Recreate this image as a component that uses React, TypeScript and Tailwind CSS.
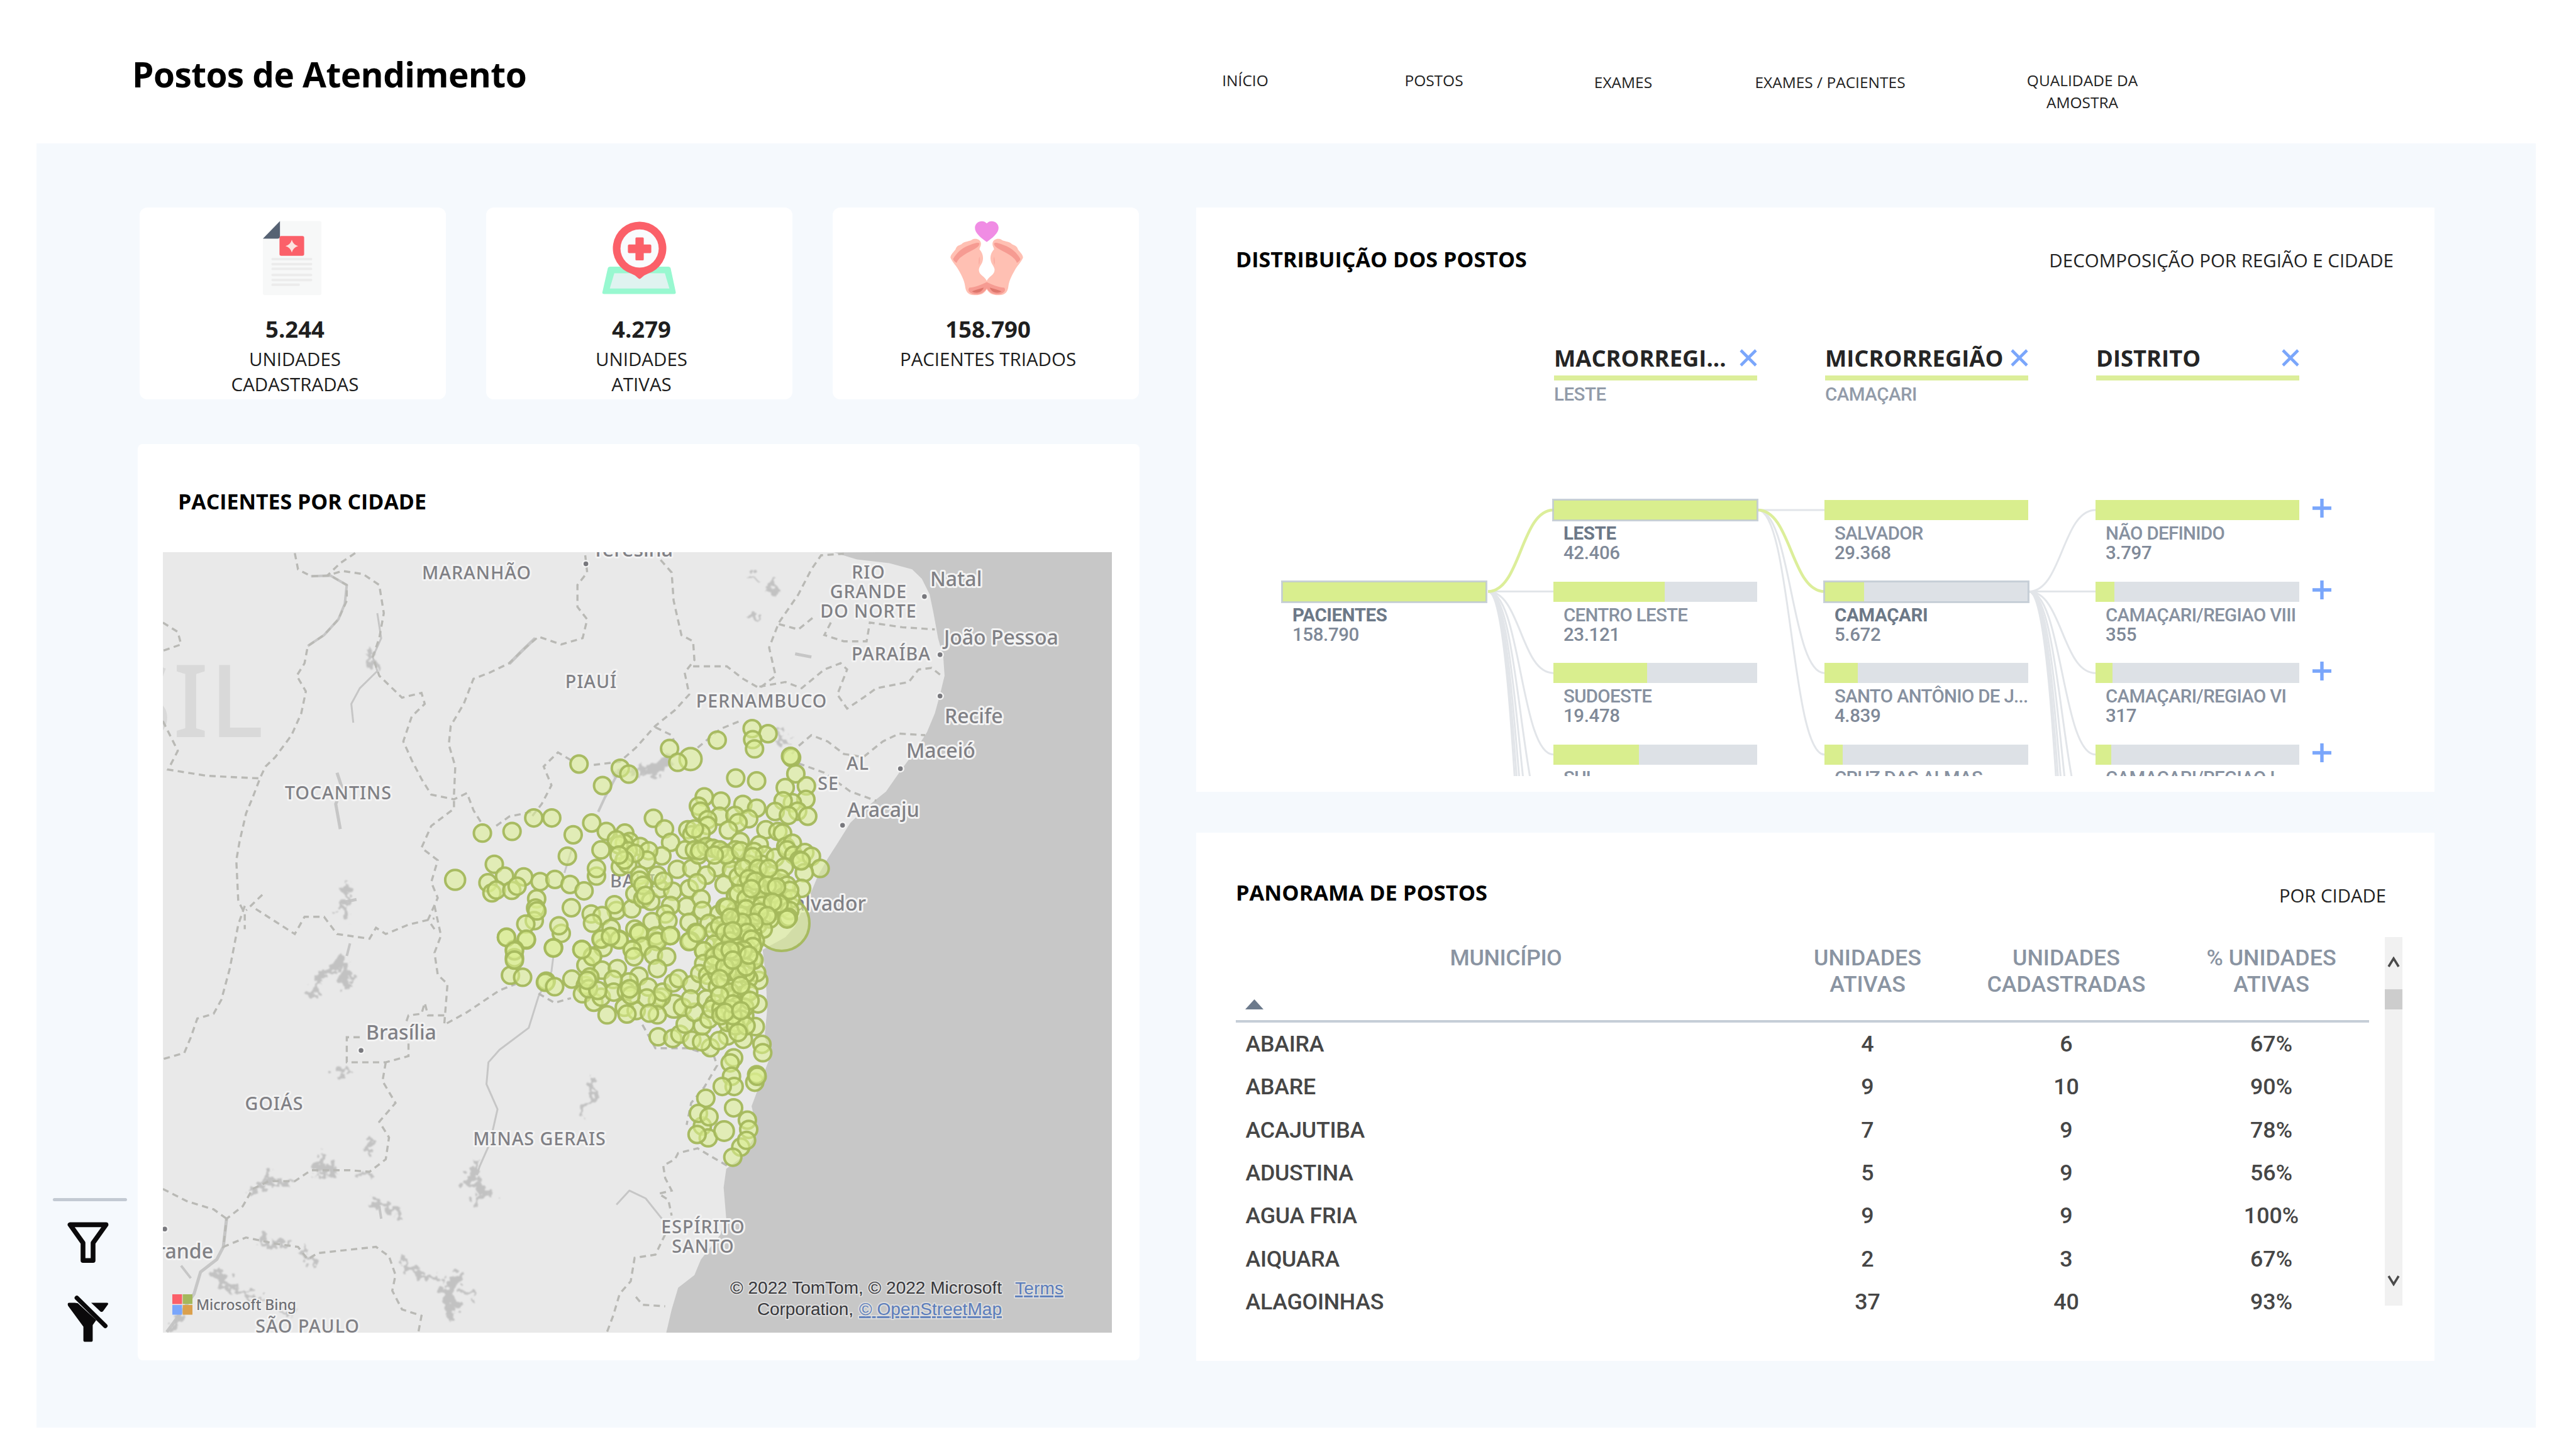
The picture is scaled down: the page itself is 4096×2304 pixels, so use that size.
import React from "react";

const SANS = "font-['Open_Sans','Noto_Sans',sans-serif]";
const DIN = "font-[Roboto,'Noto_Sans',sans-serif]";

/* ---------- header ---------- */

const NAV = [
  { label: "INÍCIO", cls: "w-[300px] pt-[111px]" },
  { label: "POSTOS", cls: "w-[300px] pt-[111px]" },
  { label: "EXAMES", cls: "w-[302px] pt-[114px]" },
  { label: "EXAMES / PACIENTES", cls: "w-[356px] pt-[114px]" },
  { label: "QUALIDADE DA AMOSTRA", cls: "w-[446px] px-[120px] pt-[111px]" },
];

function Header() {
  return (
    <header className="flex h-[228px] w-full bg-white text-black">
      <h1 className="w-[1830px] pl-[210px] pt-[78px] text-[55px] leading-[80px] font-bold tracking-[-0.6px]">
        Postos de Atendimento
      </h1>
      <nav className="flex text-[24.5px] leading-[34.5px] text-[#222]">
        {NAV.map((n) => (
          <a key={n.label} className={`block text-center ${n.cls}`}>
            {n.label}
          </a>
        ))}
      </nav>
    </header>
  );
}

/* ---------- icons ---------- */

function DocumentIcon() {
  return (
    <svg className="h-[144px] w-[144px] -translate-x-[3px]" viewBox="0 0 720 720">
      <path d="M278 48H590Q606 48 606 64V620Q606 636 590 636H156Q140 636 140 620V190H278Z" fill="#f7f8f8" />
      <path d="M276 48V168Q276 188 256 188H140Z" fill="#566273" />
      <rect x="272" y="166" width="196" height="158" rx="14" fill="#fb6069" />
      <path d="M370 196Q380 234 420 246Q380 258 370 298Q360 258 320 246Q360 234 370 196Z" fill="#fbe4e0" />
      <g fill="#ececec">
        <rect x="208" y="340" width="324" height="20" rx="8" />
        <rect x="208" y="380" width="324" height="20" rx="8" />
        <rect x="208" y="418" width="324" height="20" rx="8" />
        <rect x="208" y="466" width="324" height="20" rx="8" />
        <rect x="208" y="506" width="324" height="20" rx="8" />
        <rect x="208" y="544" width="226" height="20" rx="8" />
      </g>
    </svg>
  );
}

function PinIcon() {
  return (
    <svg className="h-[144px] w-[156px] -translate-x-[2px]" viewBox="0 0 780 720">
      <path d="M172 410H632Q648 410 652 424L692 610Q696 628 680 628H122Q104 628 110 610L152 424Q156 410 172 410Z" fill="#98f8d0" />
      <path d="M204 462H606L642 584H168Z" fill="#dff3f0" />
      <path d="M405 52A212 212 0 0 1 470 466Q440 476 418 500Q405 514 392 500Q370 476 340 466A212 212 0 0 1 405 52Z" fill="#fb6069" />
      <circle cx="405" cy="266" r="152" fill="#f9fbfd" />
      <path d="M380 178H430Q438 178 438 186V234H488Q498 234 498 244V292Q498 302 488 302H438V352Q438 360 430 360H380Q372 360 372 352V302H322Q312 302 312 292V244Q312 234 322 234H372V186Q372 178 380 178Z" fill="#fb6069" />
    </svg>
  );
}

function Foot() {
  return (
    <>
      <path
        d="M92 340C88 318 120 290 132 272C140 244 160 240 178 232C192 216 210 214 224 210C242 202 252 204 262 196C290 180 330 192 334 224C336 246 324 256 322 272C344 296 352 322 350 350C346 390 322 404 318 430C316 456 330 470 346 484C360 496 374 508 380 524V590C356 632 320 638 280 636C232 634 214 612 208 566C202 520 180 480 160 444C140 404 110 380 92 340Z"
        fill="#ffc0b3"
      />
      <path d="M112 350C140 300 180 262 240 240C280 226 322 210 322 230C316 262 262 278 220 304C180 328 150 350 140 380C128 372 116 362 112 350Z" fill="#f69b92" />
      <path d="M322 330Q334 360 318 396Q310 360 322 330Z" fill="#fbaea3" />
      <path d="M380 532C330 556 300 570 240 578C226 600 240 622 284 630C330 632 360 616 380 582Z" fill="#f69b92" />
      <path d="M262 606C300 590 330 584 356 576C344 612 300 630 262 606Z" fill="#dd766c" />
    </>
  );
}

function FeetIcon() {
  return (
    <svg className="h-[144px] w-[156px] translate-x-[4px]" viewBox="0 0 780 720">
      <Foot />
      <g transform="translate(760 0) scale(-1 1)">
        <Foot />
      </g>
      <path d="M380 214C340 186 284 144 286 100C288 52 348 32 380 66C412 32 472 52 474 100C476 144 420 186 380 214Z" fill="#f08ce4" />
    </svg>
  );
}

function FunnelIcon() {
  return (
    <svg className="h-[66px] w-[66px]" viewBox="0 0 330 330">
      <path
        d="M22 22H308L205 166V306H125V166Z"
        fill="none"
        stroke="#0b0a0b"
        strokeWidth="38"
        strokeLinejoin="round"
      />
    </svg>
  );
}

function FunnelOffIcon() {
  return (
    <svg className="h-[76px] w-[66px]" viewBox="0 0 330 380">
      <path d="M14 62H60L84 66L230 200L202 240V362Q202 372 192 372H138Q128 372 128 362V252L6 86Q-2 62 14 62Z" fill="#0b0a0b" />
      <path d="M76 24L302 246" stroke="#0b0a0b" strokeWidth="36" strokeLinecap="round" />
      <path d="M190 62H316Q330 64 322 78L284 130Q274 140 264 132Z" fill="#0b0a0b" />
    </svg>
  );
}

function CrossIcon() {
  return (
    <svg className="h-[28px] w-[28px]" viewBox="0 0 28 28">
      <path d="M2 2L26 26M26 2L2 26" stroke="#7aa6fb" strokeWidth="4.6" />
    </svg>
  );
}

function PlusIcon() {
  return (
    <svg className="h-[30px] w-[30px]" viewBox="0 0 30 30">
      <path d="M15 0V30M0 15H30" stroke="#7aa6fb" strokeWidth="5.4" />
    </svg>
  );
}

/* ---------- KPI cards ---------- */

function Kpi({ icon, value, label, labelCls }: { icon: React.ReactNode; value: string; label: string; labelCls: string }) {
  return (
    <div className="flex h-[305px] w-[487px] flex-col items-center rounded-[12px] bg-white pt-[12px]">
      {icon}
      <div className="mt-[17px] pl-[7px] text-[36.5px] leading-[40px] font-bold text-[#1f1f1f]">{value}</div>
      <div className={`mt-[8px] pl-[7px] text-center text-[29.5px] leading-[39.5px] text-[#1c1c1c] ${labelCls}`}>{label}</div>
    </div>
  );
}

/* ---------- map ---------- */

const MAP_W = 1508.6;
const MAP_H = 1241.4;
const GEO = "matrix(1.0332 0 0 .49745 -43.4 -181.6)";
const GEO_S = "matrix(1.0332 0 0 .49745 -43.4 562.4)";

const SEA =
  "M1075 366L1110 388L1160 400L1195 420L1210 450L1222 500L1228 560L1235 640L1243 700L1245 760L1238 820L1230 880L1218 940L1200 1000L1175 1070L1155 1130L1125 1180L1100 1230L1082 1290L1065 1345L1050 1400L1040 1450L1030 1490L1015 1560L1000 1596L965 1636L970 1726L972 1826L968 1916L978 1970L957 2086L948 2136L957 2216L935 2296L909 2336L905 2396L909 2496L900 2546L870 2626L860 2676L835 2716L825 2786L816 2866H1510V360Z";

const BORDERS_N = [
  "245 368 250 420 270 442 300 440 325 470 325 520 312 580 290 630 265 665 260 720 248 760 262 810 255 880 240 950 215 1020 200 1050 192 1085 180 1150 170 1200 160 1290 155 1350 158 1480 168 1520 168 1570",
  "338 368 315 400 295 440 318 425 350 435 375 470 382 560 375 640 365 700 375 760 395 800 410 830 440 815 445 850 425 890 412 970 425 1030 440 1090 455 1140 490 1155 510 1135 520 1190 535 1240",
  "692 375 695 430 680 470 680 540 695 580 688 640 655 660 620 635 600 670 575 720 545 750 520 770 505 850 485 920 482 980 492 1050 490 1140",
  "808 390 825 430 828 520 840 630 858 650 860 710 845 750 852 820 830 870 800 920 770 990 745 1035 705 1045",
  "670 1030 650 1005 628 1050 640 1110 625 1170 610 1210",
  "800 925 825 950 830 975",
  "858 730 910 730 935 770 960 800 985 760 975 670 990 590 1020 500 1040 420 1055 375 1090 370",
  "990 595 1020 612 1045 570",
  "960 795 1000 780 1025 800 1060 740 1085 720 1095 740 1080 820 1095 865 1120 830 1140 800 1190 780 1205 740 1225 735 1240 760",
  "1070 590 1060 630 1090 650 1125 650 1130 590 1180 605 1230 612",
  "865 990 900 930 930 905",
  "1010 1010 1020 985 1040 950 1065 970 1090 1010 1120 1020 1150 970 1175 945 1215 950",
  "1020 1040 1060 1070 1100 1130 1140 1160",
  "42 590 65 620 70 660 42 680",
  "42 905 65 1000 50 1060 110 1080 190 1088",
  "490 1160 490 1185 455 1240 440 1310 465 1350 455 1420 465 1470 450 1540 460 1570",
  "195 1460 170 1510",
  "555 1240 575 1210 610 1195",
];

const BORDERS_S = [
  "168 0 158 60 145 200 132 300 120 345 95 360 85 420 75 470 42 490",
  "460 0 470 95 460 150 465 220 480 250 475 380 510 340 560 270 585 250",
  "185 10 215 50 245 90 260 35 290 35 310 90 360 105 370 70 385 90 420 60 460 40",
  "620 280 645 310 670 295",
  "780 380 800 455 850 455 890 480 895 510 875 580 855 630 848 700",
  "910 830 885 800 865 775 835 790 830 810 812 830 815 870 825 910 805 920 820 940 825 990",
  "815 1050 800 1115 768 1125 762 1200 745 1240 735 1310 725 1365",
  "770 1250 780 1275 815 1280",
  "475 350 450 350 445 310 440 345 420 350 415 380",
  "345 420 325 420 325 500 385 500 420 480 420 410",
  "385 500 380 560 400 630 375 690 390 740 385 810 360 850 330 845 270 845 245 880 205 880 180 905 165 960 140 1000 135 1090 170 1060 215 1080 250 1090 265 1130 280 1110 370 1090 390 1120 400 1180 395 1230 410 1290 440 1310 435 1365",
  "42 905 80 945 120 970 140 1000",
];

const RIVERS_N: [string, number][] = [
  ["270 442 300 440 325 470 322 530 312 580 290 630 265 665", 4],
  ["372 560 378 640 365 700 372 745 345 800 332 850 335 910", 3],
  ["365 680 362 720 378 745", 7],
  ["615 640 590 690 575 722", 5],
  ["712 1195 722 1150 735 1100 745 1060", 4],
  ["780 1062 800 1065 815 1030 825 1010", 13],
  ["740 1075 780 1062", 7],
  ["310 1070 318 1120 308 1170 315 1250", 5],
  ["322 1420 328 1470 318 1490 325 1530", 8],
  ["318 1485 340 1475", 5],
  ["950 430 955 460", 6],
  ["980 465 988 490 975 485", 7],
  ["945 575 960 575", 7],
  ["1015 690 1040 700", 5],
  ["990 930 992 960 1008 980", 8],
  ["672 1310 660 1390", 3],
];

const RIVERS_S: [string, number][] = [
  ["643 160 640 210 620 290 605 390 560 460 543 500 540 570 557 650 545 760 530 830 525 860", 3],
  ["140 1000 135 1090 125 1130 100 1170 90 1240 70 1300 48 1362", 5],
  ["75 1300 55 1360", 9],
  ["740 955 760 910 785 935 810 1000", 3],
  ["330 120 325 160", 4],
  ["272 290 275 250 290 215 312 190 318 165 322 200 318 235 332 268", 9],
  ["318 190 335 240", 7],
  ["700 550 702 580 710 605 695 630 685 668", 6],
  ["525 820 520 860 512 880 530 900 545 920 525 935 520 955", 10],
  ["292 795 285 820 275 840 300 830 285 850 310 850", 8],
  ["345 850 365 865", 8],
  ["362 740 360 790", 6],
  ["365 945 390 965 410 985", 9],
  ["375 960 378 1000", 4],
  ["305 515 322 530 318 545", 6],
  ["240 880 205 885 185 900 175 930", 6],
  ["200 850 208 880", 7],
  ["190 1065 212 1085 240 1078", 7],
  ["258 1090 265 1130 280 1155", 6],
  ["408 1130 425 1165 470 1200", 7],
  ["500 1165 490 1200 478 1240 490 1280 480 1320", 12],
  ["500 1220 525 1250", 7],
  ["120 1160 140 1200 160 1240 210 1265 240 1310", 6],
  ["125 1170 135 1220", 10],
  ["70 1150 85 1190", 4],
];

const CITIES: [number, number][] = [
  [672.6, 18.4],
  [1210.9, 70.6],
  [1235.7, 163.1],
  [1235.7, 228.8],
  [1172.7, 344.2],
  [1080.7, 434.2],
  [315.1, 792.2],
  [3, 1076.3],
];

type Label = { t: string; x: number; y: number; a?: "start" | "middle" | "end"; city?: boolean };
const LABELS: Label[] = [
  { t: "Teresina", x: 747, y: 7, a: "middle", city: true },
  { t: "MARANHÃO", x: 499, y: 43, a: "middle" },
  { t: "PIAUÍ", x: 681, y: 216, a: "middle" },
  { t: "PERNAMBUCO", x: 952, y: 247, a: "middle" },
  { t: "RIO", x: 1122, y: 42, a: "middle" },
  { t: "GRANDE", x: 1122, y: 73, a: "middle" },
  { t: "DO NORTE", x: 1122, y: 104, a: "middle" },
  { t: "PARAÍBA", x: 1158, y: 172, a: "middle" },
  { t: "Natal", x: 1220, y: 54, city: true },
  { t: "João Pessoa", x: 1242, y: 147, city: true },
  { t: "Recife", x: 1243, y: 272, city: true },
  { t: "Maceió", x: 1182, y: 327, city: true },
  { t: "AL", x: 1105, y: 346, a: "middle" },
  { t: "SE", x: 1058, y: 378, a: "middle" },
  { t: "Aracaju", x: 1088, y: 421, city: true },
  { t: "Salvador", x: 1118, y: 570, a: "end", city: true },
  { t: "TOCANTINS", x: 279, y: 393, a: "middle" },
  { t: "BAHIA", x: 711, y: 533 },
  { t: "Brasília", x: 323, y: 775, city: true },
  { t: "GOIÁS", x: 177, y: 887, a: "middle" },
  { t: "MINAS GERAIS", x: 599, y: 943, a: "middle" },
  { t: "ESPÍRITO", x: 859, y: 1083, a: "middle" },
  { t: "SANTO", x: 859, y: 1114, a: "middle" },
  { t: "Grande", x: 80, y: 1123, a: "end", city: true },
  { t: "SÃO PAULO", x: 230, y: 1241, a: "middle" },
];

/* Municipality markers: x,y pairs on the marker grid. */
const NORTH =
  "1203,180 1263,210 1205,245 1212,300 1071,248 891,298 922,380 549,390 705,415 737,450 638,518 1352,352 1348,344 1368,448 1328,530 1408,520 1406,600 1141,473 1220,490 1022,585 1085,610 1168,630 1220,652 1355,620 1320,608 1290,672 1375,670 1413,700 1340,695 1000,640 1008,670 1080,700 1035,720 1138,695 1190,715 1150,738 1113,782 960,780 1035,755 975,810 1010,800 985,775 1255,780 1300,790 1318,800 1158,850 1230,870 830,712 872,775 895,855 378,710 446,710 296,790 184,800 597,740 652,790 527,810 505,937 722,800 740,850 632,900 720,860 700,870 780,880 862,935 812,905 735,905 805,960 705,1000 733,985 778,1050 615,1055 615,1010 229,985 205,1095 268,1055 340,1060 402,1088 458,1075 515,1105 568,1143 220,1155 237,1138 295,1140 315,1115 389,1190 385,1245 380,1320 390,1262 348,1340 275,1418 350,1435 350,1430 305,1490 305,1540 520,1243 482,1395 473,1350 453,1480 690,1260 683,1225 595,1280 636,1290 748,1250 600,1335 670,1365 635,1430 700,1430 668,1415 560,1490 600,1530 640,1480 760,1160 790,1190 820,1205 855,1130 903,1145 845,1050 868,1085 778,1080 920,1015 975,1010 950,900 1000,930 985,900 1030,880 1055,890 1095,915 1140,900 1118,950 1070,1005 1030,1050 1125,1020 965,1130 995,1095 1097,1105 1010,1190 955,1235 895,1230 875,1280 825,1325 885,1320 1015,1260 965,1330 1078,1280 1040,1335 990,1390 895,1408 760,1370 775,1390 790,1470 750,1490 840,1440 970,1440 1020,1500 840,1410 1140,1170 1100,1240 690,840 760,920 720,960 700,930 790,1110 800,1170 1005,905 1080,900 1105,930 1060,930 1160,905";
const EAST =
  "1210,910 1250,930 1190,985 1240,985 1205,940 1290,945 1330,880 1355,860 1335,900 1360,930 1402,915 1380,960 1427,938 1460,1010 1325,1000 1400,1035 1390,1128 1388,965 1205,1045 1160,1100 1180,1108 1150,1060 1245,1075 1282,1085 1270,1050 1310,1070 1335,1110 1230,1120 1195,1165 1150,1160 1225,1205 1250,1165 1285,1160 1284,1130 1320,1180 1350,1190 1300,1200 1345,1140 1205,1240 1265,1255 1285,1260 1320,1240 1345,1260 1140,1260 1165,1250 1110,1240 1190,1300 1135,1312 1150,1330 1240,1310 1225,1345 1270,1310 1340,1300 1335,1310 1180,1350 1245,1370 1205,1395 1110,1360 1085,1415 1060,1380 1130,1410 1150,1370 1170,1430 1215,1440 1205,1475 1090,1470 1060,1460 1140,1460 1165,1520 1116,1540 1140,1510 1190,1540 1055,1530 1205,1550 1080,1350 1160,1290 1215,1290 1305,1220 1170,1010 1225,1010 1265,1010 1190,1070 1215,1085 1260,1110 1295,1120 1180,1190 1200,1130 1240,1230 1280,1210 1180,1250 1230,1270 1260,1290 1210,1330 1165,1330 1120,1300 1185,1390 1100,1390 1120,1440 1100,1500 1150,1480 1185,1490 1130,1380 1200,1430";
const SOUTH =
  "290,300 336,312 425,335 422,342 457,368 522,323 575,240 600,190 560,148 636,270 694,260 452,138 275,75 305,155 305,210 632,85 700,90 668,70 775,50 790,130 750,150 757,190 845,100 893,65 830,180 880,190 845,260 775,305 738,340 678,325 573,360 590,310 562,410 605,460 633,430 655,535 680,400 720,490 765,510 728,395 730,530 810,370 860,430 845,450 805,435 865,400 845,535 815,525 905,345 925,320 975,355 940,490 848,665 903,675 930,650 975,685 1045,730 1012,695 1110,660 1077,688 1170,680 950,590 1015,600 985,520 1085,515 1040,560 1110,580 1225,470 1215,605 1228,330 1220,285 1205,130 1175,540 1140,580 1240,710 1243,760 1133,790 1120,820 1125,900 1135,960 1090,960 1213,935 1220,890 1222,900 1028,1030 1133,1087 1015,1195 1000,1120 1040,1140 1185,1160 1190,1215 1160,1320 1182,1280 1037,1265 995,1245 1130,1380 965,100 995,50 1020,155 1020,230 1005,290 1035,300 970,440 1040,340 1070,290 1072,370 1100,330 1145,340 1165,330 1190,320 1180,290 1210,210 1160,190 1116,200 1085,230 1060,190 1140,250 1055,240 1110,280 1150,290 1180,250 1030,440 1060,470 1050,500 1085,500 1115,440 1140,430 1165,420 1190,400 1120,400 1080,420 1150,480 1120,500 1175,490 1195,450 1160,560 1140,600 1180,600 1150,640 1085,540 1130,540 1100,250 1170,150 1145,160 585,380 620,390 745,420 740,380 580,330 1090,160 1120,150 1190,180 1130,210 1160,360 1130,470 1100,520 1160,510 1080,320";

const SCALE_X = 0.42092;
const SCALE_Y = 0.26786;
function toDots(list: string, dy: number, r: number) {
  return list.split(" ").map((p) => {
    const [x, y] = p.split(",").map(Number);
    return { x: x * SCALE_X + 430.6, y: y * SCALE_Y + dy, r };
  });
}
const DOTS = [
  { x: 984, y: 590, r: 44 },
  { x: 839, y: 329, r: 17.5 },
  { x: 464.7, y: 521, r: 15.8 },
  ...toDots(NORTH, 232.4, 13.6),
  { x: 813, y: 722, r: 18 },
  ...toDots(EAST, 232.4, 13.6),
  ...toDots(SOUTH, 592.4, 13.6),
  { x: 892.4, y: 920.5, r: 15.5 },
];

function Lines({ items, at }: { items: string[]; at: string }) {
  return (
    <g transform={at} fill="none" stroke="#b9b9b5" strokeWidth="3.4" strokeDasharray="10 7">
      {items.map((p) => (
        <polyline key={p} points={p} vectorEffect="non-scaling-stroke" />
      ))}
    </g>
  );
}

function Rivers({ items, at, lakes }: { items: [string, number][]; at: string; lakes?: boolean }) {
  return (
    <g transform={at} fill="none" stroke={lakes ? "#c2c2c2" : "#c6c6c6"} strokeLinejoin="round">
      {items
        .filter(([, w]) => w > 5 === !!lakes)
        .map(([p, w]) => (
          <polyline key={p} points={p} strokeWidth={lakes ? w + 2 : w} vectorEffect="non-scaling-stroke" />
        ))}
    </g>
  );
}

function BahiaMap() {
  return (
    <svg
      className="block h-[1241.4px] w-[1508.6px] font-['Noto_Sans','Open_Sans',sans-serif]"
      viewBox={`0 0 ${MAP_W} ${MAP_H}`}
    >
      <defs>
        <filter id="shore" x="0" y="0" width="1" height="1" filterUnits="objectBoundingBox">
          <feTurbulence type="fractalNoise" baseFrequency="0.09" numOctaves="2" seed="7" />
          <feDisplacementMap in="SourceGraphic" scale="34" xChannelSelector="R" yChannelSelector="G" />
          <feGaussianBlur stdDeviation="0.8" />
        </filter>
      </defs>
      <rect width={MAP_W} height={MAP_H} fill="#e9e9e9" />
      <text x="162" y="294" textAnchor="end" fontSize="160" fontWeight="500" letterSpacing="2" fill="#d9d9d9">
        BRASIL
      </text>
      <path d={SEA} transform={GEO} fill="#c7c7c7" />
      <Rivers items={RIVERS_N} at={GEO} />
      <Rivers items={RIVERS_S} at={GEO_S} />
      <g filter="url(#shore)">
        <rect width={MAP_W} height={MAP_H} fill="none" />
        <Rivers items={RIVERS_N} at={GEO} lakes />
        <Rivers items={RIVERS_S} at={GEO_S} lakes />
      </g>
      <Lines items={BORDERS_N} at={GEO} />
      <Lines items={BORDERS_S} at={GEO_S} />
      {CITIES.map(([x, y]) => (
        <circle key={`${x}-${y}`} cx={x} cy={y} r="5" fill="#78787d" stroke="#f4f4f4" strokeWidth="2.5" />
      ))}
      <g fill="#808085" fontWeight="500" stroke="#f3f3f3" strokeWidth="6" strokeLinejoin="round" style={{ paintOrder: "stroke" }}>
        {LABELS.map((l) => (
          <text
            key={l.t}
            x={l.x}
            y={l.y}
            textAnchor={l.a ?? "start"}
            fontSize={l.city ? 32 : 28.6}
            letterSpacing={l.city ? 0 : 1}
          >
            {l.t}
          </text>
        ))}
      </g>
      <g fill="#dbee90" fillOpacity="0.58" stroke="#a4b85c" strokeWidth="4" strokeOpacity="0.95">
        {DOTS.map((d, i) => (
          <circle key={i} cx={d.x} cy={d.y} r={d.r} />
        ))}
      </g>
      <rect x="15" y="1180" width="15.5" height="15.5" fill="#fb6069" />
      <rect x="31.5" y="1180" width="15.5" height="15.5" fill="#a4b85c" />
      <rect x="15" y="1197" width="15.5" height="15.5" fill="#7aa6fb" />
      <rect x="31.5" y="1197" width="15.5" height="15.5" fill="#dba04c" />
      <text x="53" y="1205" fontSize="23" fontWeight="500" textLength="159" fill="#707075" stroke="#f1f1f1" strokeWidth="4" style={{ paintOrder: "stroke" }}>
        Microsoft Bing
      </text>
      <g
        fontFamily="Liberation Sans, sans-serif"
        fontSize="28"
        stroke="#dcdcdc"
        strokeWidth="4"
        strokeLinejoin="round"
        fill="#38383c"
        style={{ paintOrder: "stroke" }}
      >
        <text x="902" y="1179" textLength="432">
          © 2022 TomTom, © 2022 Microsoft
        </text>
        <text x="945" y="1213" textLength="153">
          Corporation,
        </text>
        <text x="1355" y="1180" textLength="77" fill="#5b7dbb" textDecoration="underline">
          Terms
        </text>
        <text x="1107" y="1213" textLength="227" fill="#5b7dbb" textDecoration="underline">
          © OpenStreetMap
        </text>
      </g>
    </svg>
  );
}

/* ---------- decomposition tree ---------- */

const ROW = 129.6;
type Node = { name: string; value: string; pct: number; selected?: boolean };
const COLUMNS: { x: number; start: number; plus?: boolean; nodes: Node[] }[] = [
  { x: 137, start: 1, nodes: [{ name: "PACIENTES", value: "158.790", pct: 100, selected: true }] },
  {
    x: 568,
    start: 0,
    nodes: [
      { name: "LESTE", value: "42.406", pct: 100, selected: true },
      { name: "CENTRO LESTE", value: "23.121", pct: 54.6 },
      { name: "SUDOESTE", value: "19.478", pct: 46 },
      { name: "SUL", value: "17.902", pct: 42 },
    ],
  },
  {
    x: 999,
    start: 0,
    nodes: [
      { name: "SALVADOR", value: "29.368", pct: 100 },
      { name: "CAMAÇARI", value: "5.672", pct: 19.3, selected: true },
      { name: "SANTO ANTÔNIO DE J...", value: "4.839", pct: 16.5 },
      { name: "CRUZ DAS ALMAS", value: "2.527", pct: 8.9 },
    ],
  },
  {
    x: 1430,
    start: 0,
    plus: true,
    nodes: [
      { name: "NÃO DEFINIDO", value: "3.797", pct: 100 },
      { name: "CAMAÇARI/REGIAO VIII", value: "355", pct: 9.4 },
      { name: "CAMAÇARI/REGIAO VI", value: "317", pct: 8.3 },
      { name: "CAMAÇARI/REGIAO I", value: "290", pct: 7.7 },
    ],
  },
];

const LINKS = [
  { x: 464, row: 1, to: 568, targets: [8, 7, 6, 5, 4, 3, 2, 1, 0], on: 0 },
  { x: 893, row: 0, to: 999, targets: [0, 3, 2, 1], on: 1 },
  { x: 1324, row: 1, to: 1430, targets: [8, 7, 6, 5, 4, 3, 2, 1, 0], on: -1 },
];

const HEADS = [
  { t: "MACRORREGI...", s: "LESTE" },
  { t: "MICRORREGIÃO", s: "CAMAÇARI" },
  { t: "DISTRITO", s: "" },
];

function Tree() {
  const cy = (r: number) => 31 + r * ROW;
  return (
    <div className={`relative h-[454px] w-[1969px] overflow-hidden ${DIN}`}>
      <svg className="absolute inset-0 h-[456px] w-[1969px]" viewBox="0 0 1969 456" fill="none">
        {LINKS.flatMap((l) =>
          l.targets.map((t) => {
            const m = (l.x + l.to) / 2;
            const on = t === l.on;
            return (
              <path
                key={`${l.x}-${t}`}
                d={`M${l.x} ${cy(l.row)}C${m} ${cy(l.row)} ${m} ${cy(t)} ${l.to} ${cy(t)}`}
                stroke={on ? "#dcee9a" : "#e2e5e9"}
                strokeWidth={on ? 4.5 : 3}
              />
            );
          }),
        )}
      </svg>
      {COLUMNS.map((c) =>
        c.nodes.map((n, i) => (
          <div
            key={n.name}
            className="absolute w-[324px]"
            style={{ left: c.x, top: 15 + (c.start + i) * ROW }}
          >
            <div className="relative h-[32px] w-full bg-[#dde1e6]">
              <div className="h-full bg-[#d9ee8e]" style={{ width: `${n.pct}%` }} />
              {n.selected && (
                <div className="absolute inset-[-2px] border-[3px] border-[#bcc5cf]/80" />
              )}
              {c.plus && (
                <div className="absolute top-[-2px] left-[345px]">
                  <PlusIcon />
                </div>
              )}
            </div>
            <div
              className={`mt-[6px] pl-[16px] text-[29.5px] leading-[30px] whitespace-nowrap ${n.selected ? "font-bold tracking-[-0.4px] text-[#6c7887]" : "font-medium tracking-[-0.7px] text-[#8791a0]"}`}
            >
              {n.name}
            </div>
            <div className="pt-[1px] pl-[16px] text-[29.5px] leading-[30px] font-medium tracking-[-0.4px] text-[#7f8998]">{n.value}</div>
          </div>
        )),
      )}
    </div>
  );
}

function Decomposition() {
  return (
    <section className="flex h-[929px] w-[1969px] flex-col bg-white">
      <div className="flex h-[204px] items-start justify-between pt-[61px] pr-[65px] pl-[63px]">
        <h2 className="text-[34.1px] leading-[42px] font-bold text-black">DISTRIBUIÇÃO DOS POSTOS</h2>
        <span className="pt-[2px] text-[29.5px] leading-[42px] text-[#222]">DECOMPOSIÇÃO POR REGIÃO E CIDADE</span>
      </div>
      <div className="flex h-[246px] gap-[108px] pl-[569px]">
        {HEADS.map((h) => (
          <div key={h.t} className="w-[323px]">
            <div className="flex h-[63px] items-center justify-between pt-[6px]">
              <span className="text-[36.4px] leading-[44px] font-bold whitespace-nowrap text-[#252525]">{h.t}</span>
              <CrossIcon />
            </div>
            <div className="h-[8px] bg-[#dcee9a]" />
            <div className={`mt-[5px] text-[29.5px] leading-[34px] font-medium tracking-[-0.5px] text-[#929ba9] ${DIN}`}>{h.s}</div>
          </div>
        ))}
      </div>
      <Tree />
    </section>
  );
}

/* ---------- table ---------- */

const ROWS: [string, string, string, string][] = [
  ["ABAIRA", "4", "6", "67%"],
  ["ABARE", "9", "10", "90%"],
  ["ACAJUTIBA", "7", "9", "78%"],
  ["ADUSTINA", "5", "9", "56%"],
  ["AGUA FRIA", "9", "9", "100%"],
  ["AIQUARA", "2", "3", "67%"],
  ["ALAGOINHAS", "37", "40", "93%"],
];
const GRID = "grid grid-cols-[858px_292px_340px_312px]";

function Panorama() {
  return (
    <section className="flex h-[840px] w-[1969px] flex-col bg-white">
      <div className="flex h-[166px] items-start justify-between pt-[74px] pr-[77px] pl-[63px]">
        <h2 className="text-[34.4px] leading-[42px] font-bold text-black">PANORAMA DE POSTOS</h2>
        <span className="pt-[5px] text-[29.3px] leading-[42px] text-[#222]">POR CIDADE</span>
      </div>
      <div className="flex pl-[63.5px]">
        <div className={`w-[1802px] text-[35.8px] font-medium ${DIN}`}>
          <div className={`${GRID} h-[136px] border-b-[4px] border-[#c6ced7] pt-[12px] text-center leading-[42.8px] text-[#8a94a2]`}>
            <div>
              <div className="tracking-[-0.4px]">MUNICÍPIO</div>
              <svg className="mt-[45px] ml-[15px] h-[16px] w-[29px]" viewBox="0 0 29 16">
                <path d="M14.5 0L29 16H0Z" fill="#6c7a8c" />
              </svg>
            </div>
            <div>
              UNIDADES
              <br />
              ATIVAS
            </div>
            <div>
              UNIDADES
              <br />
              CADASTRADAS
            </div>
            <div>
              % UNIDADES
              <br />
              ATIVAS
            </div>
          </div>
          {ROWS.map((r) => (
            <div key={r[0]} className={`${GRID} h-[68.4px] items-center pt-[2px] text-center text-[#464646]`}>
              <div className="pl-[15px] text-left tracking-[-0.3px]">{r[0]}</div>
              <div>{r[1]}</div>
              <div>{r[2]}</div>
              <div>{r[3]}</div>
            </div>
          ))}
        </div>
        <div className="ml-[25px] flex h-[586px] w-[28px] flex-col items-center bg-[#f1f1f1]">
          <svg className="mt-[31px] h-[18px] w-[20px]" viewBox="0 0 20 18" fill="none">
            <path d="M2 16L10 3L18 16" stroke="#4a4a4a" strokeWidth="3.6" />
          </svg>
          <div className="mt-[34px] h-[32px] w-full bg-[#cdcdcd]" />
          <svg className="mt-auto mb-[31px] h-[18px] w-[20px]" viewBox="0 0 20 18" fill="none">
            <path d="M2 2L10 15L18 2" stroke="#4a4a4a" strokeWidth="3.6" />
          </svg>
        </div>
      </div>
    </section>
  );
}

/* ---------- page ---------- */

export default function App() {
  return (
    <div className={`h-[2304px] w-[4096px] overflow-hidden bg-white ${SANS}`}>
      <Header />
      <main className="ml-[57.6px] flex h-[2042px] w-[3974.4px] bg-[#f5f9fd]">
        <aside className="flex w-[161.4px] flex-col items-start pt-[1676.5px] pl-[26px]">
          <div className="h-[5px] w-[118px] rounded-full bg-[#c3cad3]" />
          <div className="mt-[33px] ml-[23px]">
            <FunnelIcon />
          </div>
          <div className="mt-[50px] ml-[23px]">
            <FunnelOffIcon />
          </div>
        </aside>
        <div className="w-[1593px] pt-[102px]">
          <div className="flex gap-[64px] pl-[3px]">
            <Kpi icon={<DocumentIcon />} value="5.244" label="UNIDADES CADASTRADAS" labelCls="w-[260px]" />
            <Kpi icon={<PinIcon />} value="4.279" label="UNIDADES ATIVAS" labelCls="w-[230px]" />
            <Kpi icon={<FeetIcon />} value="158.790" label="PACIENTES TRIADOS" labelCls="w-[340px]" />
          </div>
          <section className="mt-[71px] h-[1457px] rounded-[8px] bg-white">
            <h2 className="h-[172px] pt-[70px] pl-[64px] text-[33.9px] leading-[42px] font-bold text-black">
              PACIENTES POR CIDADE
            </h2>
            <div className="pl-[40.4px]">
              <BahiaMap />
            </div>
          </section>
        </div>
        <div className="flex flex-col gap-[64.5px] pt-[102px] pl-[90px]">
          <Decomposition />
          <Panorama />
        </div>
      </main>
    </div>
  );
}
